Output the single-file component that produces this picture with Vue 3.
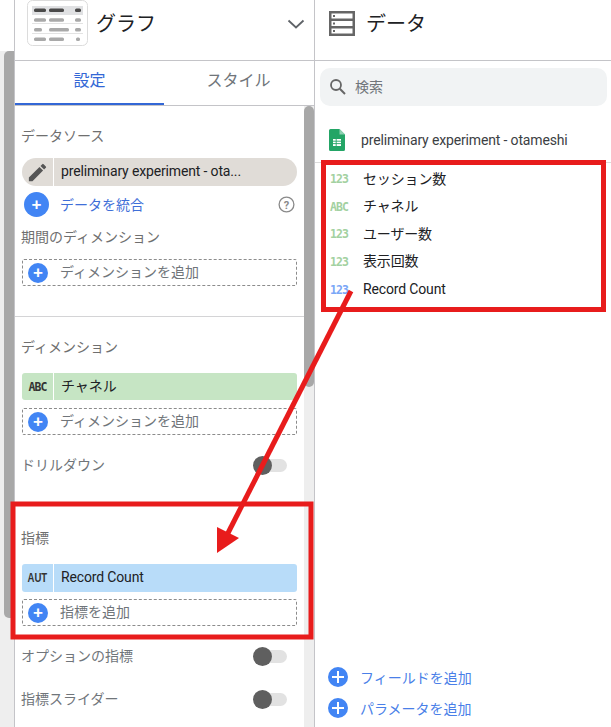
<script setup>
const fields = [
  { type: '123', name: 'セッション数', tone: 'green' },
  { type: 'ABC', name: 'チャネル', tone: 'green' },
  { type: '123', name: 'ユーザー数', tone: 'green' },
  { type: '123', name: '表示回数', tone: 'green' },
  { type: '123', name: 'Record Count', tone: 'blue' },
]
const previewRows = [
  [{ x: 7, w: 12 }, { x: 22, w: 15 }, { x: 48, w: 6 }],
  [{ x: 7, w: 12 }, { x: 22, w: 15 }, { x: 48, w: 6 }],
  [{ x: 7, w: 8 }, { x: 22, w: 20 }, { x: 48, w: 6 }],
  [{ x: 7, w: 12 }, { x: 22, w: 15 }, { x: 49, w: 4 }],
]
</script>

<template>
  <div class="page">
    <div class="gutter">
      <div class="gutter-thumb"></div>
    </div>

    <section class="left">
      <header class="head left-head">
        <svg class="chart-tile" width="62" height="47" viewBox="0 0 62 47">
          <rect x="0.5" y="0.5" width="60" height="45" rx="5" fill="#fff" stroke="#dcdcdc" />
          <rect x="5" y="6" width="51" height="9" fill="#e0e1e3" />
          <rect x="5" y="23" width="51" height="1" fill="#e3e3e3" />
          <rect x="5" y="33" width="51" height="1" fill="#e3e3e3" />
          <g v-for="(row, r) in previewRows" :key="r">
            <rect
              v-for="(b, i) in row"
              :key="i"
              :x="b.x"
              :y="8.5 + r * 9.7"
              :width="b.w"
              height="3.5"
              rx="1.5"
              :fill="r === 0 ? '#4a4a4a' : '#a9a9a9'"
            />
          </g>
        </svg>
        <span class="head-title">グラフ</span>
        <svg class="chevron" width="18" height="10" viewBox="0 0 18 10">
          <path d="M1.5 1.5 L9 8.5 L16.5 1.5" fill="none" stroke="#5f6368" stroke-width="1.8" />
        </svg>
      </header>

      <nav class="tabs">
        <div class="tab active">設定</div>
        <div class="tab">スタイル</div>
      </nav>

      <div class="scroll">
        <div class="props">
          <div class="block source-block">
            <div class="label">データソース</div>
            <div class="chip chip-source">
              <span class="chip-icon">
                <svg width="23" height="23" viewBox="0 0 24 24">
                  <path fill="#555" d="M3 17.25V21h3.75L17.81 9.94l-3.75-3.75L3 17.25zM20.71 7.04a1 1 0 0 0 0-1.41l-2.34-2.34a1 1 0 0 0-1.41 0l-1.83 1.83 3.75 3.75 1.83-1.83z" />
                </svg>
              </span>
              <span class="chip-text latin">preliminary experiment - ota...</span>
            </div>
            <div class="blend">
              <span class="plus plus-big">+</span>
              <span class="blend-text">データを統合</span>
              <svg class="help" width="17" height="17" viewBox="0 0 17 17">
                <circle cx="8.5" cy="8.5" r="7.4" fill="none" stroke="#8a8a8a" stroke-width="1.3" />
                <text x="8.5" y="12.5" text-anchor="middle" font-size="11" font-weight="700" fill="#8a8a8a" font-family="Roboto, sans-serif">?</text>
              </svg>
            </div>
            <div class="label date-label">期間のディメンション</div>
            <div class="add">
              <span class="plus">+</span>
              <span class="add-text">ディメンションを追加</span>
            </div>
          </div>

          <div class="block dim-block">
            <div class="label">ディメンション</div>
            <div class="chip chip-green">
              <span class="chip-icon type-dark">ABC</span>
              <span class="chip-text cjk">チャネル</span>
            </div>
            <div class="add">
              <span class="plus">+</span>
              <span class="add-text">ディメンションを追加</span>
            </div>
            <div class="switch-row drill">
              <span class="switch-text">ドリルダウン</span>
              <span class="switch"></span>
            </div>
          </div>

          <div class="block metric-block">
            <div class="label">指標</div>
            <div class="chip chip-blue">
              <span class="chip-icon type-aut"><span class="squeeze">AUT</span></span>
              <span class="chip-text latin">Record Count</span>
            </div>
            <div class="add">
              <span class="plus">+</span>
              <span class="add-text">指標を追加</span>
            </div>
            <div class="switch-row optional">
              <span class="switch-text">オプションの指標</span>
              <span class="switch"></span>
            </div>
            <div class="switch-row slider">
              <span class="switch-text">指標スライダー</span>
              <span class="switch"></span>
            </div>
          </div>
        </div>
        <div class="track"><div class="thumb"></div></div>
      </div>
    </section>

    <section class="right">
      <header class="head right-head">
        <svg width="27" height="27" viewBox="0 0 27 27">
          <rect x="0" y="1" width="26" height="25" fill="#666" />
          <rect x="2.5" y="3.5" width="21" height="5" fill="#fff" />
          <rect x="2.5" y="11" width="21" height="5" fill="#fff" />
          <rect x="2.5" y="18.5" width="21" height="5" fill="#fff" />
          <rect x="4" y="5" width="2" height="2" fill="#666" />
          <rect x="4" y="12.5" width="2" height="2" fill="#666" />
          <rect x="4" y="20" width="2" height="2" fill="#666" />
        </svg>
        <span class="head-title">データ</span>
      </header>

      <div class="search">
        <svg width="18" height="18" viewBox="0 0 18 18">
          <circle cx="7" cy="7" r="5" fill="none" stroke="#666" stroke-width="1.8" />
          <path d="M10.8 10.8 L16 16" stroke="#666" stroke-width="2" />
        </svg>
        <span class="search-text">検索</span>
      </div>

      <div class="source">
        <svg width="16" height="22" viewBox="0 0 16 22">
          <path d="M1.5 0 H10.5 L16 5.5 V20.5 A1.5 1.5 0 0 1 14.5 22 H1.5 A1.5 1.5 0 0 1 0 20.5 V1.5 A1.5 1.5 0 0 1 1.5 0z" fill="#23a566" />
          <path d="M10.5 0 L16 5.5 H10.5z" fill="#8ed1b1" />
          <rect x="4" y="10" width="8" height="7" fill="#fff" />
          <path d="M4 12.2 H12 M4 14.6 H12 M7.2 10 V17" stroke="#23a566" stroke-width="0.9" />
        </svg>
        <span class="latin">preliminary experiment - otameshi</span>
      </div>

      <ul class="fields">
        <li v-for="f in fields" :key="f.name" class="field">
          <span class="type" :class="f.tone">{{ f.type }}</span>
          <span class="latin">{{ f.name }}</span>
        </li>
      </ul>

      <div class="actions">
        <div class="action"><span class="plus plus-action"></span><span>フィールドを追加</span></div>
        <div class="action"><span class="plus plus-action"></span><span>パラメータを追加</span></div>
      </div>
    </section>

    <svg class="marks" width="611" height="727" viewBox="0 0 611 727">
      <g fill="none" stroke="#e81c1c" stroke-width="5">
        <rect x="323.5" y="162.5" width="280" height="147" />
        <rect x="13" y="504" width="298" height="133" />
      </g>
      <path d="M351 291 L227 535" stroke="#e81c1c" stroke-width="5" fill="none" />
      <path d="M217 553 L217 527 L239 538z" fill="#e81c1c" />
    </svg>
  </div>
</template>

<style>
html, body { margin: 0; background: #fff; }
</style>

<style scoped>
.page {
  position: relative;
  display: flex;
  width: 611px;
  height: 727px;
  overflow: hidden;
  background: #fff;
  font-family: Roboto, "Noto Sans CJK JP", sans-serif;
  font-size: 14px;
  color: #202124;
}
.latin { letter-spacing: -0.15px; }
.gutter {
  box-sizing: border-box;
  width: 15px;
  flex: none;
  padding: 51px 0 0 4px;
  border-right: 1px solid #c4c4c8;
  background: linear-gradient(#fff 51px, #eeeeee 51px);
}
.gutter-thumb {
  height: 567px;
  background: #a8a8a8;
  border-radius: 5px 0 0 5px;
}
.left {
  box-sizing: border-box;
  width: 300px;
  flex: none;
  display: flex;
  flex-direction: column;
  border-right: 1px solid #c4c4c8;
}
.head {
  box-sizing: border-box;
  height: 61px;
  flex: none;
  display: flex;
  align-items: center;
  padding-bottom: 13px;
  border-bottom: 1px solid #c4c4c8;
}
.left-head { padding-left: 12px; padding-right: 9px; }
.head-title {
  font-size: 20px;
  line-height: 28px;
  color: #202124;
  margin-left: 7px;
}
.chevron { margin-left: auto; }
.tabs {
  box-sizing: border-box;
  display: flex;
  height: 45px;
  flex: none;
  border-bottom: 1px solid #c4c4c8;
}
.tab {
  width: 149px;
  box-sizing: border-box;
  height: 44px;
  padding-top: 9px;
  text-align: center;
  font-size: 16px;
  line-height: 22px;
  color: #70757a;
}
.tab.active {
  color: #3367d6;
  border-bottom: 2px solid #3367d6;
}
.scroll {
  flex: 1;
  display: flex;
  min-height: 0;
}
.props { flex: 1; min-width: 0; }
.track {
  width: 10px;
  flex: none;
  background: #eeeeee;
}
.thumb {
  height: 281px;
  background: #a8a8a8;
  border-radius: 5px;
}
.block { padding: 0 7px 0 7px; }
.source-block {
  height: 211px;
  box-sizing: border-box;
  padding-top: 20px;
  border-bottom: 1px solid #d4d4d6;
}
.label {
  font-size: 14px;
  line-height: 20px;
  color: #6f6f6f;
  margin-left: -1px;
}
.chip {
  display: flex;
  align-items: center;
  height: 27px;
  margin-top: 12px;
  border-radius: 3px;
  overflow: hidden;
}
.chip-icon {
  box-sizing: border-box;
  width: 32px;
  height: 100%;
  flex: none;
  display: flex;
  align-items: center;
  justify-content: center;
  border-right: 1px solid #fff;
}
.chip-text {
  margin-left: 7px;
  margin-bottom: 2px;
  color: #202124;
  white-space: nowrap;
}
.chip-text.cjk { margin-bottom: 4px; }
.chip-source {
  height: 28px;
  border-radius: 14px;
  background: #e0dcd7;
}
.chip-green { background: #c6e5c4; }
.chip-blue { background: #b8dcf9; height: 28px; }
.type-dark {
  font-family: "DejaVu Sans Mono", monospace;
  font-weight: 700;
  font-size: 11.5px;
  letter-spacing: -0.9px;
  color: #333;
}
.type-aut {
  font-family: "Liberation Sans", sans-serif;
  font-weight: 700;
  font-size: 12px;
  color: #333;
}
.squeeze {
  display: inline-block;
  transform: scaleX(0.8);
}
.blend {
  display: flex;
  align-items: center;
  height: 25px;
  margin-top: 6px;
  padding-left: 2px;
}
.blend-text { margin-left: 11px; margin-bottom: 2px; color: #3f6fd8; }
.help { margin-left: auto; margin-right: 2px; }
.source-block .date-label { margin-top: 10px; }
.plus {
  box-sizing: border-box;
  width: 20px;
  height: 20px;
  flex: none;
  display: flex;
  align-items: center;
  justify-content: center;
  border-radius: 50%;
  background: #4285f4;
  color: #fff;
  font-family: "Liberation Sans", sans-serif;
  font-weight: 700;
  font-size: 17px;
  line-height: 1;
}
.plus-big { width: 25px; height: 25px; }
.add {
  box-sizing: border-box;
  display: flex;
  align-items: center;
  height: 27px;
  margin-top: 12px;
  padding-left: 5px;
  border: 1px dashed #8c8c8c;
  border-radius: 2px;
  color: #70757a;
}
.add .plus { margin-right: 12px; }
.add-text { margin-bottom: 3px; }
.dim-block { padding-top: 20px; height: 185px; box-sizing: border-box; }
.dim-block .chip { margin-top: 16px; }
.dim-block .add { margin-top: 8px; }
.metric-block { padding-top: 26px; }
.metric-block .chip { margin-top: 16px; }
.metric-block .add { margin-top: 7px; }
.switch-row {
  display: flex;
  align-items: center;
  justify-content: space-between;
  height: 20px;
  color: #70757a;
  margin-left: -1px;
}
.switch-text { margin-bottom: 2px; }
.drill { margin-top: 20px; }
.optional { margin-top: 20px; }
.slider { margin-top: 23px; }
.switch {
  position: relative;
  width: 32px;
  height: 13px;
  margin-right: 10px;
  border-radius: 7px;
  background: #e2e2e2;
}
.switch::before {
  content: "";
  position: absolute;
  left: -2px;
  top: -3px;
  width: 19px;
  height: 19px;
  border-radius: 50%;
  background: #5f5f5f;
}
.right {
  flex: 1;
  min-width: 0;
  display: flex;
  flex-direction: column;
}
.right-head { padding-left: 14px; }
.right-head .head-title { margin-left: 10px; }
.search {
  display: flex;
  align-items: center;
  gap: 8px;
  height: 38px;
  margin: 7px 4px 0 5px;
  padding-left: 9px;
  background: #f1f3f4;
  border-radius: 10px;
  color: #70757a;
}
.search-text { margin-top: -2px; }
.source {
  display: flex;
  align-items: center;
  gap: 16px;
  margin-top: 23px;
  height: 22px;
  padding-left: 14px;
  color: #3c4043;
}
.fields {
  list-style: none;
  margin: 11px 0 0;
  padding: 1px 0 0 15px;
  border-top: 1px solid #dcdcdc;
}
.field {
  display: flex;
  align-items: center;
  height: 27.5px;
  color: #202124;
}
.field:last-child { padding-top: 1px; }
.type {
  width: 33px;
  flex: none;
  padding-top: 3px;
  font-family: "DejaVu Sans Mono", monospace;
  font-weight: 700;
  font-size: 11.5px;
  letter-spacing: -0.9px;
}
.type.green { color: #a3d1a1; }
.type.blue { color: #7ba7f7; }
.actions {
  margin-top: auto;
  padding: 0 0 4px 13px;
}
.action {
  display: flex;
  align-items: center;
  gap: 12px;
  height: 31px;
  color: #4a7fe8;
}
.plus-action {
  position: relative;
}
.plus-action::before,
.plus-action::after {
  content: "";
  position: absolute;
  background: #fff;
}
.plus-action::before { left: 4px; right: 4px; top: 9px; height: 2px; }
.plus-action::after { top: 4px; bottom: 4px; left: 9px; width: 2px; }
.marks {
  position: absolute;
  left: 0;
  top: 0;
  pointer-events: none;
}
</style>
